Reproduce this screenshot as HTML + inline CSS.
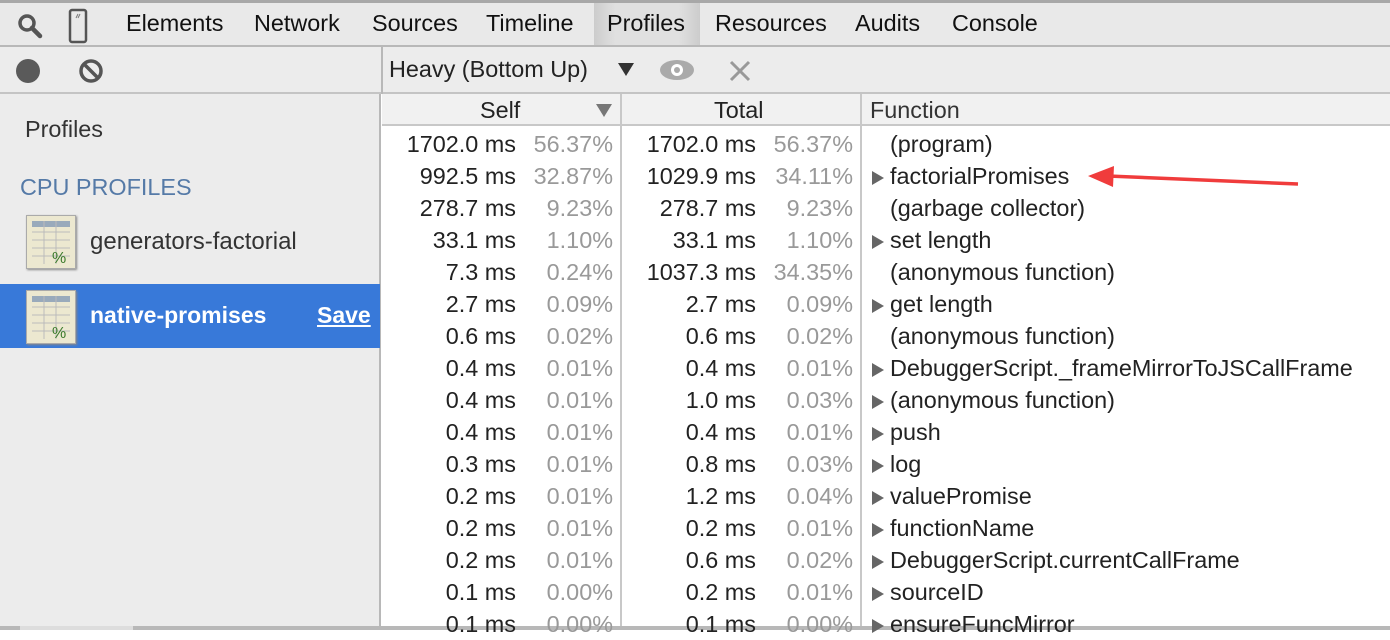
<!DOCTYPE html>
<html><head><meta charset="utf-8"><style>
*{margin:0;padding:0;box-sizing:border-box}
body{width:1390px;height:630px;overflow:hidden;background:#fff;font-family:"Liberation Sans",sans-serif;font-size:23.4px;color:#222;position:relative}
.a{position:absolute;white-space:nowrap}
#top{left:0;top:0;width:1390px;height:47px;background:#e9e9e9;border-top:3px solid #a8a8a8;border-bottom:2px solid #b8b8b8}
.tab{top:7px;color:#111}
#bar{left:0;top:47px;width:1390px;height:47px;background:#ececec;border-bottom:2px solid #c4c4c4}
#left{left:0;top:94px;width:381px;height:536px;background:#ececec;border-right:2px solid #b8b8b8}
#hdr{left:382px;top:94px;width:1008px;height:32px;background:#f1f1f1;border-bottom:2px solid #c8c8c8}
.vl{position:absolute;top:94px;width:2px;height:536px;background:#c8c8c8}
.r{position:absolute;height:32px;line-height:32px}
.ms{color:#222;text-align:right}
.pc{color:#999;text-align:right}
.tri{display:inline-block;width:0;height:0;border-left:12px solid #666;border-top:7px solid transparent;border-bottom:7px solid transparent;margin-right:6px;vertical-align:-1px}
.icon{position:absolute;width:50px;height:54px;background:#ece8d0;border:1px solid #aaa;box-shadow:1px 1px 2px #888}
</style></head><body>
<div id="top" class="a">
<svg class="a" style="left:16px;top:9px" width="30" height="30"><circle cx="11" cy="11" r="7" fill="none" stroke="#555" stroke-width="3.5"/><line x1="16" y1="16" x2="24" y2="24" stroke="#555" stroke-width="4.5" stroke-linecap="round"/></svg>
<svg class="a" style="left:67px;top:5px" width="24" height="36"><rect x="3" y="2" width="16" height="32" rx="2" fill="none" stroke="#555" stroke-width="2.5"/><line x1="9" y1="10" x2="11" y2="6" stroke="#777"/><line x1="11" y1="10" x2="13" y2="6" stroke="#777"/></svg>
<div class="a tab" style="left:126px">Elements</div>
<div class="a tab" style="left:254px">Network</div>
<div class="a tab" style="left:372px">Sources</div>
<div class="a tab" style="left:486px">Timeline</div>
<div class="a" style="left:594px;top:0;width:106px;height:42px;background:linear-gradient(90deg,#ccc,#e0e0e0 20%,#e0e0e0 80%,#ccc)"></div>
<div class="a tab" style="left:607px">Profiles</div>
<div class="a tab" style="left:715px">Resources</div>
<div class="a tab" style="left:855px">Audits</div>
<div class="a tab" style="left:952px">Console</div>
</div>
<div id="bar" class="a">
<div class="a" style="left:16px;top:12px;width:24px;height:24px;border-radius:50%;background:#5a5a5a"></div>
<svg class="a" style="left:78px;top:11px" width="26" height="26"><circle cx="13" cy="13" r="10" fill="none" stroke="#555" stroke-width="3.5"/><line x1="6" y1="6" x2="20" y2="20" stroke="#555" stroke-width="3.5"/></svg>
<div class="a" style="left:381px;top:0;width:2px;height:47px;background:#b8b8b8"></div>
<div class="a" style="left:389px;top:9px">Heavy (Bottom Up)</div>
<div class="a" style="left:618px;top:16px;width:0;height:0;border-top:13px solid #333;border-left:8px solid transparent;border-right:8px solid transparent"></div>
<svg class="a" style="left:658px;top:11px" width="38" height="24"><ellipse cx="19" cy="12" rx="17" ry="10" fill="#aaa"/><circle cx="19" cy="12" r="6" fill="#fff"/><circle cx="19" cy="12" r="3" fill="#aaa"/></svg>
<svg class="a" style="left:728px;top:12px" width="24" height="24"><path d="M3 3L21 21M21 3L3 21" stroke="#999" stroke-width="3"/></svg>
</div>
<div id="left" class="a">
<div class="a" style="left:25px;top:22px;color:#333">Profiles</div>
<div class="a" style="left:20px;top:80px;color:#557aa7">CPU PROFILES</div>
<div class="icon" style="left:26px;top:121px"><svg width="50" height="54"><rect x="5" y="5" width="38" height="6" fill="#9ab"/><g stroke="#bbb"><line x1="5" y1="16" x2="43" y2="16"/><line x1="5" y1="24" x2="43" y2="24"/><line x1="5" y1="32" x2="43" y2="32"/><line x1="5" y1="40" x2="43" y2="40"/><line x1="17" y1="5" x2="17" y2="48"/><line x1="29" y1="5" x2="29" y2="48"/></g><text x="25" y="47" font-size="16" fill="#3a7a2a" font-family="Liberation Sans">%</text></svg></div>
<div class="a" style="left:90px;top:134px;font-size:24px;color:#333">generators-factorial</div>
<div class="a" style="left:0;top:190px;width:380px;height:64px;background:#3879d9"></div>
<div class="icon" style="left:26px;top:196px"><svg width="50" height="54"><rect x="5" y="5" width="38" height="6" fill="#9ab"/><g stroke="#bbb"><line x1="5" y1="16" x2="43" y2="16"/><line x1="5" y1="24" x2="43" y2="24"/><line x1="5" y1="32" x2="43" y2="32"/><line x1="5" y1="40" x2="43" y2="40"/><line x1="17" y1="5" x2="17" y2="48"/><line x1="29" y1="5" x2="29" y2="48"/></g><text x="25" y="47" font-size="16" fill="#3a7a2a" font-family="Liberation Sans">%</text></svg></div>
<div class="a" style="left:90px;top:208px;font-size:23px;color:#fff;font-weight:bold">native-promises</div>
<div class="a" style="left:317px;top:208px;font-size:23px;color:#fff;font-weight:bold;text-decoration:underline">Save</div>
</div>
<div id="hdr" class="a">
<div class="a" style="left:98px;top:3px">Self</div>
<div class="a" style="left:214px;top:10px;width:0;height:0;border-top:13px solid #777;border-left:8px solid transparent;border-right:8px solid transparent"></div>
<div class="a" style="left:332px;top:3px">Total</div>
<div class="a" style="left:488px;top:3px;color:#333">Function</div>
</div>
<div class="vl" style="left:620px"></div>
<div class="vl" style="left:860px"></div>
<div class="a" style="left:0;top:626px;width:1390px;height:4px;background:#b8b8b8"></div>
<div class="a" style="left:20px;top:626px;width:113px;height:4px;background:#ddd"></div>
<div id="rows"></div>
<svg class="a" style="left:1080px;top:160px" width="230" height="40"><line x1="218" y1="24" x2="28" y2="16" stroke="#f03c3c" stroke-width="3.5"/><path d="M8 16L34 6L33 27Z" fill="#f03c3c"/></svg>
<script>
var d=[["1702.0 ms","56.37%","1702.0 ms","56.37%","(program)",0],["992.5 ms","32.87%","1029.9 ms","34.11%","factorialPromises",1],["278.7 ms","9.23%","278.7 ms","9.23%","(garbage collector)",0],["33.1 ms","1.10%","33.1 ms","1.10%","set length",1],["7.3 ms","0.24%","1037.3 ms","34.35%","(anonymous function)",0],["2.7 ms","0.09%","2.7 ms","0.09%","get length",1],["0.6 ms","0.02%","0.6 ms","0.02%","(anonymous function)",0],["0.4 ms","0.01%","0.4 ms","0.01%","DebuggerScript._frameMirrorToJSCallFrame",1],["0.4 ms","0.01%","1.0 ms","0.03%","(anonymous function)",1],["0.4 ms","0.01%","0.4 ms","0.01%","push",1],["0.3 ms","0.01%","0.8 ms","0.03%","log",1],["0.2 ms","0.01%","1.2 ms","0.04%","valuePromise",1],["0.2 ms","0.01%","0.2 ms","0.01%","functionName",1],["0.2 ms","0.01%","0.6 ms","0.02%","DebuggerScript.currentCallFrame",1],["0.1 ms","0.00%","0.2 ms","0.01%","sourceID",1],["0.1 ms","0.00%","0.1 ms","0.00%","ensureFuncMirror",1]];
var h="";d.forEach(function(r,i){var y=128+32*i;
h+='<div class="r ms" style="left:382px;top:'+y+'px;width:134px">'+r[0]+'</div>';
h+='<div class="r pc" style="left:520px;top:'+y+'px;width:93px">'+r[1]+'</div>';
h+='<div class="r ms" style="left:622px;top:'+y+'px;width:134px">'+r[2]+'</div>';
h+='<div class="r pc" style="left:760px;top:'+y+'px;width:93px">'+r[3]+'</div>';
h+='<div class="r" style="left:872px;top:'+y+'px;color:#222">'+(r[5]?'<span class="tri"></span>':'<span style="display:inline-block;width:18px"></span>')+r[4]+'</div>';});
document.getElementById("rows").innerHTML=h;
</script>
</body></html>
